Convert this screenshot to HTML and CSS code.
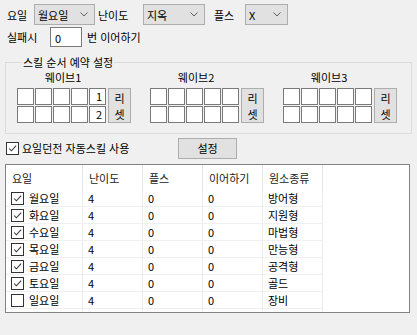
FILE: index.html
```html
<!DOCTYPE html>
<html lang="ko">
<head>
  <meta charset="UTF-8">
  <title>요일던전 설정</title>
  <link rel="stylesheet" href="styles.css">
</head>
<body>
  <div class="form">
    <!-- 상단 선택 -->
    <div class="row top-row">
      <span class="lbl lbl-day">요일</span>
      <div class="combo combo-day"><span>월요일</span><svg class="chev" viewBox="0 0 8 5"><path d="M0.5 0.5 L4 4 L7.5 0.5"/></svg></div>
      <span class="lbl lbl-level">난이도</span>
      <div class="combo combo-level"><span>지옥</span><svg class="chev" viewBox="0 0 8 5"><path d="M0.5 0.5 L4 4 L7.5 0.5"/></svg></div>
      <span class="lbl lbl-plus">플스</span>
      <div class="combo combo-plus"><span>X</span><svg class="chev" viewBox="0 0 8 5"><path d="M0.5 0.5 L4 4 L7.5 0.5"/></svg></div>
    </div>

    <div class="row retry-row">
      <span class="lbl lbl-fail">실패시</span>
      <div class="textbox">0</div>
      <span class="lbl">번 이어하기</span>
    </div>

    <!-- 스킬 순서 예약 -->
    <fieldset class="group">
      <legend>스킬 순서 예약 설정</legend>
      <div class="waves" id="waves"></div>
    </fieldset>

    <div class="row auto-row">
      <label class="check-label"><span class="check on"></span>요일던전 자동스킬 사용</label>
      <button class="btn btn-set">설정</button>
    </div>

    <!-- 요일 목록 -->
    <div class="list" id="list">
      <div class="lrow lhead">
        <div class="cell">요일</div>
        <div class="cell">난이도</div>
        <div class="cell">플스</div>
        <div class="cell">이어하기</div>
        <div class="cell">원소종류</div>
      </div>
    </div>
  </div>

  <script>
    const tick = '<svg viewBox="0 0 13 13"><path d="M2.5 6.5 L5.2 9.3 L10.8 3.2"/></svg>';
    document.querySelectorAll('.check.on').forEach(c => c.innerHTML = tick);

    // 웨이브 칸
    const waves = document.getElementById('waves');
    for (let w = 1; w <= 3; w++) {
      let cells = '';
      for (let r = 0; r < 2; r++) {
        for (let c = 0; c < 5; c++) {
          const num = (w === 1 && c === 4) ? (r + 1) : '';
          cells += `<div class="slot">${num}</div>`;
        }
      }
      waves.innerHTML += `
        <div class="wave">
          <div class="wave-title">웨이브${w}</div>
          <div class="wave-body">
            <div class="slots">${cells}</div>
            <button class="btn btn-reset"><span>리</span><span>셋</span></button>
          </div>
        </div>`;
    }

    // 목록
    const days = [
      ["월요일", "방어형", true],
      ["화요일", "지원형", true],
      ["수요일", "마법형", true],
      ["목요일", "만능형", true],
      ["금요일", "공격형", true],
      ["토요일", "골드", true],
      ["일요일", "장비", false]
    ];
    const list = document.getElementById('list');
    days.forEach(d => {
      list.innerHTML += `
        <div class="lrow">
          <div class="cell day"><span class="check ${d[2] ? 'on' : ''}">${d[2] ? tick : ''}</span>${d[0]}</div>
          <div class="cell">4</div>
          <div class="cell">0</div>
          <div class="cell">0</div>
          <div class="cell">${d[1]}</div>
        </div>`;
    });
    list.innerHTML += `<div class="lrow filler"><div class="cell"></div><div class="cell"></div><div class="cell"></div><div class="cell"></div><div class="cell"></div></div>`;
  </script>
</body>
</html>
```

FILE: styles.css
```css
body {
  margin: 0;
  background: #f0f0f0;
  font-family: "Noto Sans CJK KR", "Liberation Sans", sans-serif;
  font-size: 11px;
  color: #000;
}

.form {
  width: 417px;
  height: 335px;
  box-sizing: border-box;
  padding: 4px 0 0 5px;
}

.row {
  display: flex;
  align-items: center;
}

.lbl {
  white-space: nowrap;
}

/* 상단 콤보 */
.top-row {
  height: 21px;
}

.lbl-day {
  width: 27px;
  padding-left: 2px;
}

.lbl-level {
  width: 45px;
  margin-left: 3px;
}

.lbl-plus {
  width: 31px;
  margin-left: 9px;
}

.combo {
  height: 21px;
  box-sizing: border-box;
  border: 1px solid #adadad;
  background: #e1e1e1;
  display: flex;
  align-items: center;
  justify-content: space-between;
  padding: 0 6px 0 3px;
}

.combo-day { width: 61px; }
.combo-level { width: 62px; }
.combo-plus { width: 43px; }

.chev {
  width: 8px;
  height: 5px;
  fill: none;
  stroke: #606060;
  stroke-width: 1;
}

.retry-row {
  height: 20px;
  margin-top: 2px;
}

.lbl-fail {
  width: 43px;
  padding-left: 2px;
}

.textbox {
  width: 32px;
  height: 20px;
  box-sizing: border-box;
  border: 1px solid #7a7a7a;
  background: white;
  padding: 2px 0 0 4px;
  margin-right: 5px;
}

/* 그룹 박스 */
.group {
  margin: 8px 0 0 0;
  width: 407px;
  height: 79px;
  box-sizing: border-box;
  border: 1px solid #dcdcdc;
  padding: 0 0 0 11px;
}

.group legend {
  padding: 0 1px;
  margin-left: 5px;
  line-height: 14px;
}

.waves {
  display: flex;
  gap: 19px;
}

.wave {
  width: 114px;
}

.wave-title {
  text-align: center;
  padding-right: 22px;
  margin-top: 2px;
  line-height: 13px;
}

.wave-body {
  display: flex;
  gap: 2px;
  margin-top: 4px;
}

.slots {
  display: grid;
  grid-template-columns: repeat(5, 17px);
  grid-auto-rows: 17px;
  gap: 1px;
}

.slot {
  border: 1px solid #7a7a7a;
  background: white;
  box-sizing: border-box;
  text-align: right;
  padding-right: 3px;
  line-height: 15px;
  font-size: 11px;
}

.btn {
  font-family: inherit;
  font-size: 11px;
  background: #e1e1e1;
  border: 1px solid #adadad;
  border-radius: 0;
  padding: 0;
  color: #000;
}

.btn-reset {
  width: 23px;
  height: 35px;
  display: flex;
  flex-direction: column;
  align-items: center;
  justify-content: center;
  line-height: 16px;
}

/* 자동스킬 */
.auto-row {
  margin-top: 3px;
  height: 22px;
}

.check-label {
  display: flex;
  align-items: center;
  width: 172px;
  margin-left: 1px;
}

.check {
  width: 13px;
  height: 13px;
  box-sizing: border-box;
  border: 1px solid #333;
  background: white;
  margin-right: 3px;
  flex-shrink: 0;
}

.check svg {
  display: block;
  width: 11px;
  height: 11px;
  fill: none;
  stroke: #333;
  stroke-width: 1.2;
}

.btn-set {
  width: 59px;
  height: 21px;
}

/* 목록 */
.list {
  margin-top: 5px;
  width: 405px;
  height: 149px;
  box-sizing: border-box;
  border: 1px solid #828282;
  background: white;
  display: flex;
  flex-direction: column;
  overflow: hidden;
}

.lrow {
  display: grid;
  grid-template-columns: 77px 60px 60px 60px 60px;
  height: 17px;
  flex-shrink: 0;
}

.lhead {
  height: 25px;
  color: #222;
}

.cell {
  border-right: 1px solid #ebebeb;
  border-bottom: 1px solid #f0f0f0;
  padding-left: 5px;
  display: flex;
  align-items: center;
  white-space: nowrap;
}

.lhead .cell {
  border-bottom: none;
  border-right-color: #e5e5e5;
  padding-left: 6px;
}

.day .check {
  margin-right: 5px;
}

.filler {
  flex: 1;
}

.filler .cell {
  border-bottom: none;
}
```
